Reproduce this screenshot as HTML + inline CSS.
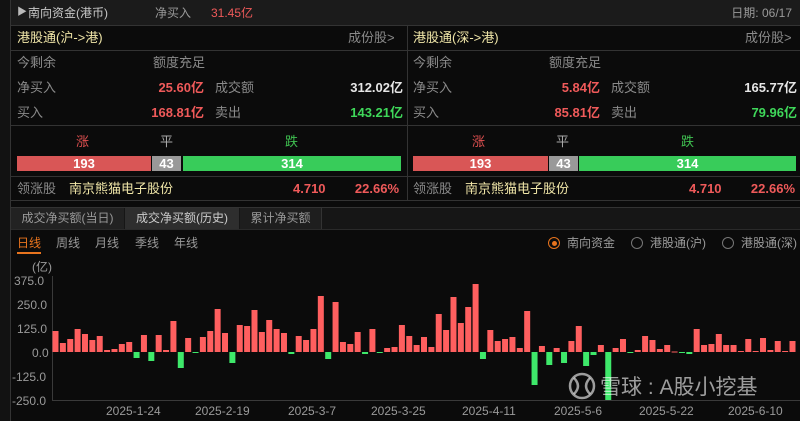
<!DOCTYPE html>
<html><head><meta charset="utf-8"><style>
*{margin:0;padding:0;box-sizing:border-box}
body{width:800px;height:421px;background:#0b0b0b;overflow:hidden;position:relative;font-family:"Liberation Sans","Noto Sans CJK SC",sans-serif;font-size:12px;color:#9a9a9a}
.a{position:absolute;white-space:nowrap;line-height:1}
.r{color:#f05a5a}.g{color:#3fd85a}.w{color:#e6e6e6}.y{color:#f0e6a8}
.hl{position:absolute;height:1px;background:#333}
.vl{position:absolute;width:1px;background:#333}
.b{font-weight:bold}
</style></head><body>
<div class="a" style="left:0;top:0;width:10px;height:421px;background:#121212"></div>
<div class="a" style="left:10px;top:0;width:790px;height:25px;background:#1b1b1b"></div>
<div class="hl" style="left:10px;top:25px;width:790px"></div>
<div class="hl" style="left:10px;top:50px;width:790px"></div>
<div class="hl" style="left:10px;top:125px;width:790px"></div>
<div class="hl" style="left:10px;top:176px;width:790px"></div>
<div class="hl" style="left:10px;top:200px;width:790px"></div>
<div class="vl" style="left:10px;top:0;height:421px"></div>
<div class="vl" style="left:407px;top:26px;height:174px"></div>

<div class="a" style="left:17px;top:8px;font-size:10px;color:#bbb">▶</div>
<div class="a" style="left:28px;top:7px;color:#c8c8c8">南向资金(港币)</div>
<div class="a" style="left:155px;top:7px">净买入</div>
<div class="a r" style="left:211px;top:7px">31.45亿</div>
<div class="a" style="right:8px;top:7px">日期: 06/17</div>

<!-- left -->
<div class="a y" style="left:17px;top:31px;font-size:13px">港股通(沪->港)</div>
<div class="a" style="left:348px;top:31px;font-size:13px;color:#8a8a8a">成份股&gt;</div>
<div class="a" style="left:17px;top:56px;font-size:13px;color:#8a8a8a">今剩余</div>
<div class="a" style="left:153px;top:56px;font-size:13px;color:#8a8a8a">额度充足</div>
<div class="a" style="left:17px;top:81px;font-size:13px;color:#8a8a8a">净买入</div>
<div class="a r b" style="right:596px;top:81px;font-size:13px">25.60亿</div>
<div class="a" style="left:215px;top:81px;font-size:13px;color:#8a8a8a">成交额</div>
<div class="a w b" style="right:397px;top:81px;font-size:13px">312.02亿</div>
<div class="a" style="left:17px;top:106px;font-size:13px;color:#8a8a8a">买入</div>
<div class="a r b" style="right:596px;top:106px;font-size:13px">168.81亿</div>
<div class="a" style="left:215px;top:106px;font-size:13px;color:#8a8a8a">卖出</div>
<div class="a g b" style="right:397px;top:106px;font-size:13px">143.21亿</div>
<div class="a" style="left:76px;top:135px;font-size:13px;color:#e05050">涨</div>
<div class="a" style="left:160px;top:135px;font-size:13px;color:#aaa">平</div>
<div class="a" style="left:285px;top:135px;font-size:13px;color:#3fc050">跌</div>
<div class="a b" style="left:17px;top:156px;width:134px;height:15px;background:#d95656;color:#fff;text-align:center;line-height:15px;font-size:13px">193</div>
<div class="a b" style="left:152px;top:156px;width:29px;height:15px;background:#999;color:#fff;text-align:center;line-height:15px;font-size:13px">43</div>
<div class="a b" style="left:183px;top:156px;width:218px;height:15px;background:#38cc5a;color:#fff;text-align:center;line-height:15px;font-size:13px">314</div>
<div class="a" style="left:17px;top:182px;font-size:13px;color:#8a8a8a">领涨股</div>
<div class="a y" style="left:69px;top:182px;font-size:13px">南京熊猫电子股份</div>
<div class="a r b" style="left:293px;top:182px;font-size:13px">4.710</div>
<div class="a r b" style="right:401px;top:182px;font-size:13px">22.66%</div>

<!-- right -->
<div class="a y" style="left:413px;top:31px;font-size:13px">港股通(深->港)</div>
<div class="a" style="left:745px;top:31px;font-size:13px;color:#8a8a8a">成份股&gt;</div>
<div class="a" style="left:413px;top:56px;font-size:13px;color:#8a8a8a">今剩余</div>
<div class="a" style="left:549px;top:56px;font-size:13px;color:#8a8a8a">额度充足</div>
<div class="a" style="left:413px;top:81px;font-size:13px;color:#8a8a8a">净买入</div>
<div class="a r b" style="right:200px;top:81px;font-size:13px">5.84亿</div>
<div class="a" style="left:611px;top:81px;font-size:13px;color:#8a8a8a">成交额</div>
<div class="a w b" style="right:3px;top:81px;font-size:13px">165.77亿</div>
<div class="a" style="left:413px;top:106px;font-size:13px;color:#8a8a8a">买入</div>
<div class="a r b" style="right:200px;top:106px;font-size:13px">85.81亿</div>
<div class="a" style="left:611px;top:106px;font-size:13px;color:#8a8a8a">卖出</div>
<div class="a g b" style="right:3px;top:106px;font-size:13px">79.96亿</div>
<div class="a" style="left:472px;top:135px;font-size:13px;color:#e05050">涨</div>
<div class="a" style="left:556px;top:135px;font-size:13px;color:#aaa">平</div>
<div class="a" style="left:681px;top:135px;font-size:13px;color:#3fc050">跌</div>
<div class="a b" style="left:413px;top:156px;width:135px;height:15px;background:#d95656;color:#fff;text-align:center;line-height:15px;font-size:13px">193</div>
<div class="a b" style="left:549px;top:156px;width:29px;height:15px;background:#999;color:#fff;text-align:center;line-height:15px;font-size:13px">43</div>
<div class="a b" style="left:579px;top:156px;width:217px;height:15px;background:#38cc5a;color:#fff;text-align:center;line-height:15px;font-size:13px">314</div>
<div class="a" style="left:413px;top:182px;font-size:13px;color:#8a8a8a">领涨股</div>
<div class="a y" style="left:465px;top:182px;font-size:13px">南京熊猫电子股份</div>
<div class="a r b" style="left:689px;top:182px;font-size:13px">4.710</div>
<div class="a r b" style="right:5px;top:182px;font-size:13px">22.66%</div>

<!-- tabs -->
<div class="a" style="left:11px;top:207px;width:789px;height:23px;background:#161616;border-top:1px solid #333;border-bottom:1px solid #2a2a2a"></div>
<div class="a" style="left:11px;top:208px;width:113px;height:21px;background:#222;color:#999;text-align:center;line-height:21px">成交净买额(当日)</div>
<div class="a" style="left:125px;top:208px;width:114px;height:21px;background:#2e2e2e;color:#ccc;text-align:center;line-height:21px">成交净买额(历史)</div>
<div class="a" style="left:240px;top:208px;width:82px;height:21px;background:#1e1e1e;color:#999;text-align:center;line-height:21px;border-right:1px solid #333">累计净买额</div>

<div class="a" style="left:17px;top:237px;font-size:12px;color:#e8741e">日线</div>
<div class="a" style="left:17px;top:252px;width:24px;height:2px;background:#e8741e"></div>
<div class="a" style="left:56px;top:237px">周线</div>
<div class="a" style="left:95px;top:237px">月线</div>
<div class="a" style="left:135px;top:237px">季线</div>
<div class="a" style="left:174px;top:237px">年线</div>

<div class="a" style="left:548px;top:237px;width:12px;height:12px;border:1.5px solid #e8741e;border-radius:50%"></div>
<div class="a" style="left:551.5px;top:240.5px;width:5px;height:5px;background:#e8741e;border-radius:50%"></div>
<div class="a" style="left:567px;top:237px">南向资金</div>
<div class="a" style="left:631px;top:237px;width:12px;height:12px;border:1.5px solid #777;border-radius:50%"></div>
<div class="a" style="left:650px;top:237px">港股通(沪)</div>
<div class="a" style="left:722px;top:237px;width:12px;height:12px;border:1.5px solid #777;border-radius:50%"></div>
<div class="a" style="left:741px;top:237px">港股通(深)</div>

<div class="a" style="left:32px;top:261px">(亿)</div>
<div class="a" style="left:14px;top:275px">375.0</div>
<div class="a" style="left:17px;top:299px">250.0</div>
<div class="a" style="left:17px;top:323px">125.0</div>
<div class="a" style="left:32px;top:347px">0.0</div>
<div class="a" style="left:12px;top:371px">-125.0</div>
<div class="a" style="left:12px;top:395px">-250.0</div>
<div class="vl" style="left:52px;top:276px;height:125px;background:#3a3a3a"></div>
<div class="hl" style="left:52px;top:400px;width:748px;background:#3a3a3a"></div>

<svg class="a" style="left:0;top:0" width="800" height="421">
<g id="bars"></g>
<circle cx="582" cy="386" r="12" fill="none" stroke="#fff" stroke-opacity="0.6" stroke-width="2.5"/>
<path d="M574 378 Q582 386 574 394 M590 378 Q582 386 590 394" fill="none" stroke="#fff" stroke-opacity="0.6" stroke-width="2.5"/>
<text x="600" y="394" font-family="Liberation Sans,Noto Sans CJK SC,sans-serif" font-size="21" fill="#ffffff" fill-opacity="0.6">雪球 : A股小挖基</text>
</svg>
<div class="a" style="left:106px;top:405px">2025-1-24</div>
<div class="a" style="left:195px;top:405px">2025-2-19</div>
<div class="a" style="left:288px;top:405px">2025-3-7</div>
<div class="a" style="left:371px;top:405px">2025-3-25</div>
<div class="a" style="left:462px;top:405px">2025-4-11</div>
<div class="a" style="left:554px;top:405px">2025-5-6</div>
<div class="a" style="left:639px;top:405px">2025-5-22</div>
<div class="a" style="left:728px;top:405px">2025-6-10</div>
<script>
var h=[21,9,13,23,18,12,16,2,3,8,10,-6,17,-9,17,2,31,-16,14,-1,15,21,43,19,-11,27,26,42,20,32,23,19,-2,16,12,23,56,-7,50,10,8,20,-2,23,-1,4,5,
27,16,7,15,5,38,22,55,29,45,68,-7,22,11,13,15,4,41,-33,6,-13,4,-11,11,26,-14,-3,7,-48,4,13,-1,2,16,12,3,7,0.5,-1,-2,23,7,8,18,7,7,1,13,1,14,2,11,1,11];
var s='';for(var i=0;i<h.length;i++){var x=52.5+i*7.37,v=h[i];
if(v>=0)s+='<rect x="'+x+'" y="'+(352-v)+'" width="6" height="'+Math.max(v,1)+'" fill="#ff5f5f"/>';
else s+='<rect x="'+x+'" y="352" width="6" height="'+(-v)+'" fill="#3ee86a"/>';}
document.getElementById('bars').innerHTML=s;
</script>
</body></html>
